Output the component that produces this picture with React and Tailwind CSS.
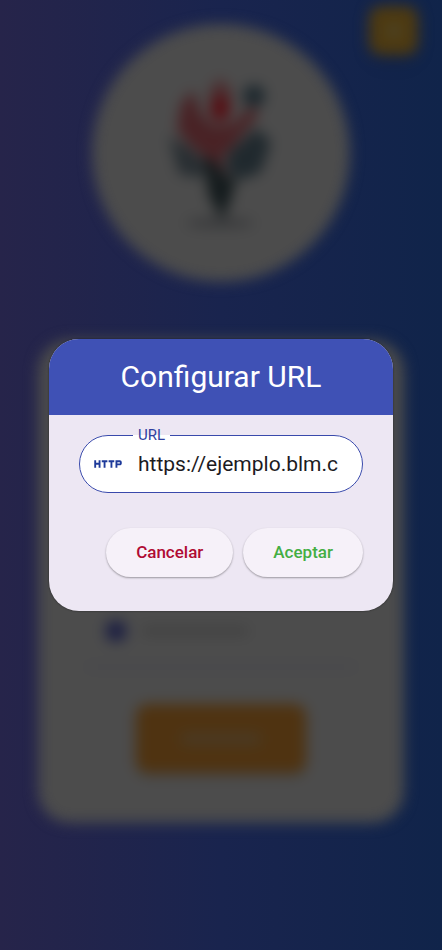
import { useState } from 'react';
import { MdHttp } from 'react-icons/md';

function Logo() {
  return (
    <svg viewBox="0 -2 140 190" className="h-[190px] w-[140px]" aria-hidden="true">
      {/* hojas */}
      <path d="M18 76 L38 88 L56 104 L50 118 L28 114 Z" fill="#282e32" />
      <path d="M78 92 L106 68 L120 82 L110 112 L90 120 L74 108 Z" fill="#20292e" />
      <circle cx="103" cy="36" r="11" fill="#1c272d" />
      {/* figura */}
      <path d="M30 44 L42 30 L50 54 L62 66 L82 64 L100 46 L108 54 L82 86 L70 98 L76 118 L62 102 L42 88 L26 70 Z" fill="#492225" />
      <path d="M69 18 L80 30 L80 52 L69 62 L59 50 L59 30 Z" fill="#4c2a2c" />
      <ellipse cx="69" cy="49" rx="10" ry="12" fill="#560e13" />
      {/* tallo */}
      <path d="M52 96 L64 102 L76 118 L86 116 L79 142 L71 160 L58 136 Z" fill="#141b1d" />
      <ellipse cx="69" cy="163" rx="34" ry="5" fill="#38393b" />
    </svg>
  );
}

function FieldRow({ textWidth }) {
  return (
    <div className="flex h-[60px] items-center gap-4 border-b-2 border-[#3e3e4c] px-5 pb-3">
      <span className="h-5 w-5 rounded-md bg-[#1c1f42]" />
      <span className={`h-2 rounded bg-[#404040] ${textWidth}`} />
    </div>
  );
}

// Pantalla de acceso que queda detrás del diálogo
function LoginBackdrop() {
  return (
    <div inert aria-hidden="true" className="relative flex flex-col items-center px-[38px] pt-6 pb-12 blur-[7px]">
      <button
        type="button"
        className="absolute top-[6px] right-6 flex h-[49px] w-[49px] items-center justify-center rounded-xl bg-[#4e3a10] shadow-lg"
      >
        <span className="h-4 w-4 rounded-full bg-[#4c4225]" />
      </button>

      <div className="flex h-[258px] w-[258px] items-center justify-center rounded-full bg-[#4c4c4c]">
        <Logo />
      </div>

      <div className="mt-[58px] flex w-full flex-col rounded-[32px] bg-[#4c4c4c] px-12 pt-20 pb-[50px]">
        <span className="h-10 w-40 self-center" />
        <div className="mt-8 flex flex-col gap-14">
          <FieldRow textWidth="w-20" />
          <FieldRow textWidth="w-[106px]" />
        </div>
        <button
          type="button"
          className="mt-9 flex h-[69px] w-[170px] items-center justify-center self-center rounded-xl bg-[#4f3311] shadow-md"
        >
          <span className="h-3 w-20 rounded bg-[#4a3a24]" />
        </button>
      </div>
    </div>
  );
}

function ConfigDialog() {
  const [url, setUrl] = useState('https://ejemplo.blm.com');

  return (
    <form
      role="dialog"
      aria-labelledby="config-title"
      onSubmit={(e) => e.preventDefault()}
      className="w-full max-w-md overflow-hidden rounded-[30px] bg-[#ede7f3] shadow-[0_0_2px_rgba(0,0,0,0.6)]"
    >
      <h1
        id="config-title"
        className="flex h-[76px] items-center justify-center bg-[#3f51b5] text-[30px] leading-9 text-white"
      >
        Configurar URL
      </h1>

      <div className="px-[30px] pt-3 pb-[34px]">
        <fieldset className="h-[66px] rounded-[30px] border border-[#3949ab] bg-white pr-6 pl-[53px]">
          <legend className="px-[5px] text-[15px] leading-4 text-[#303f9f]">
            <label htmlFor="url">URL</label>
          </legend>
          <div className="relative pl-[5px]">
            <MdHttp size={30} className="absolute top-[6px] -left-10 text-[#1e3a9a]" aria-hidden="true" />
            <input
              id="url"
              type="text"
              value={url}
              onChange={(e) => setUrl(e.target.value)}
              className="h-[42px] w-full bg-transparent text-[21px] text-[#1c1b1f] outline-none"
            />
          </div>
        </fieldset>

        <div className="mt-[35px] flex justify-end gap-[10px]">
          <button
            type="button"
            className="h-[49px] rounded-full bg-[#f6f1f9] px-[30px] text-[17px] font-medium text-[#b00b34] shadow-[0_1px_2px_rgba(0,0,0,0.35)]"
          >
            Cancelar
          </button>
          <button
            type="submit"
            className="h-[49px] rounded-full bg-[#f6f1f9] px-[30px] text-[17px] font-medium text-[#43ae43] shadow-[0_1px_2px_rgba(0,0,0,0.35)]"
          >
            Aceptar
          </button>
        </div>
      </div>
    </form>
  );
}

export default function App() {
  return (
    <main className="relative min-h-screen overflow-hidden bg-linear-to-r from-[#26244a] via-[#19244e] to-[#10244a] font-['Roboto',sans-serif]">
      <LoginBackdrop />
      <div className="absolute inset-0 flex items-center justify-center px-[49px]">
        <ConfigDialog />
      </div>
    </main>
  );
}
